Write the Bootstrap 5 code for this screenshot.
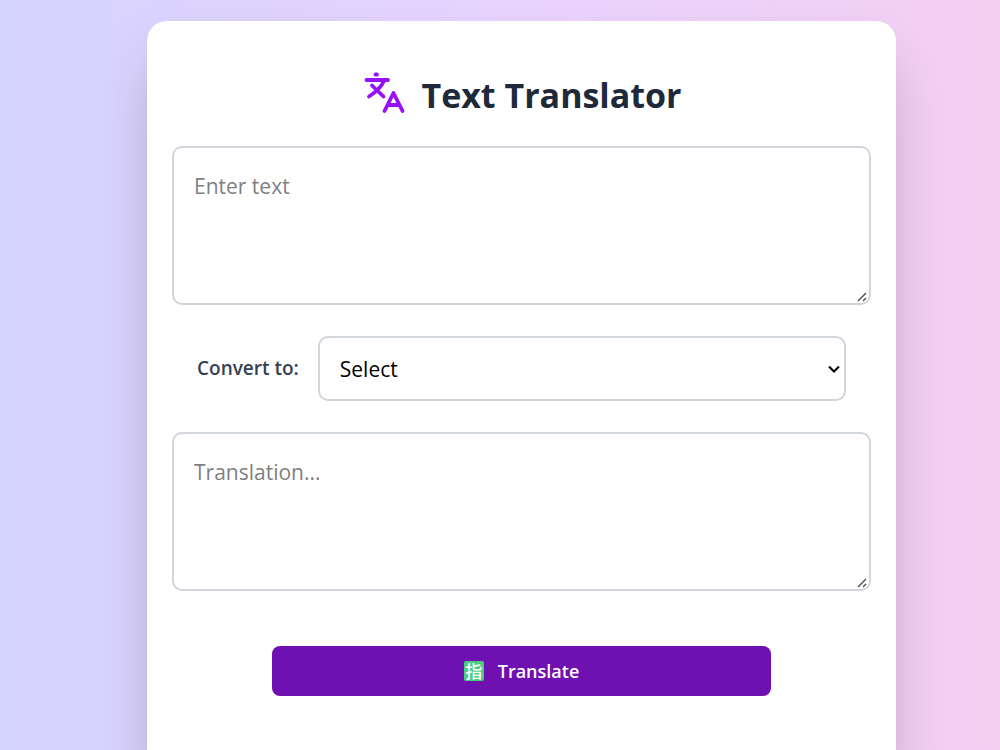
<!DOCTYPE html>
<html lang="en">
<head>
<meta charset="utf-8">
<meta name="viewport" content="width=device-width, initial-scale=1">
<title>Text Translator</title>
<link rel="stylesheet" href="https://cdn.jsdelivr.net/npm/bootstrap@5.3.0/dist/css/bootstrap.min.css">
<style>
  body {
    font-family: "Open Sans", "Noto Sans", sans-serif;
    background: linear-gradient(90deg, #d5d3ff 0%, #e9d4ff 52%, #f5cff2 100%);
    min-height: 100vh;
  }
  .page { padding: 21px 10.4% 0 14.7%; }
  .translator {
    border: 0;
    border-radius: 20px;
    padding: 44px 25px 96px;
    box-shadow: 0 31px 62px -12px rgba(0, 0, 0, .25);
  }
  .title { font-size: 34px; line-height: 48px; color: #1e2939; gap: 12px; margin-bottom: 27px; }
  .title span { padding-top: 6px; }
  .field { border: 2px solid #d1d5dc; border-radius: 10px; font-size: 21px; line-height: 32px; color: #000; }
  .field::placeholder { color: #808080; }
  textarea.field { height: 159px; min-height: 159px; padding: 22px 20px 16px; resize: vertical; }
  textarea.field::-webkit-resizer {
    background: url("data:image/svg+xml,%3Csvg xmlns='http://www.w3.org/2000/svg' width='15' height='15' viewBox='0 0 15 15'%3E%3Cpath d='M4 13 12 5M9 13 12 10' fill='none' stroke='%23555' stroke-width='1.500'/%3E%3C/svg%3E") no-repeat right bottom;
  }
  .target { padding: 0 25px; gap: 19px; margin: 31px 0; }
  .target label { font-size: 19px; color: #364153; white-space: nowrap; }
  select.field {
    height: 65px;
    padding: 0 36px 0 20px;
    background-image: url("data:image/svg+xml,%3Csvg xmlns='http://www.w3.org/2000/svg' viewBox='0 0 12 12'%3E%3Cpath d='M1 3.500 6 8.500 11 3.500' fill='none' stroke='%23000' stroke-width='2'/%3E%3C/svg%3E");
    background-size: 12px 12px;
    background-position: right 4px center;
  }
  .go {
    --bs-btn-color: #fff;
    --bs-btn-bg: #6e11b0;
    --bs-btn-hover-color: #fff;
    --bs-btn-hover-bg: #59168b;
    --bs-btn-active-color: #fff;
    --bs-btn-active-bg: #59168b;
    height: 50px;
    border: 0;
    border-radius: 8px;
    font-size: 18px;
    gap: 14px;
  }
  .action { --bs-gutter-x: 50px; margin-top: 55px; }
  .glyph {
    width: 20px;
    height: 20px;
    border-radius: 2px;
    background: #4ccb83;
    font: 500 17px/19px "Noto Sans CJK JP", sans-serif;
  }
</style>
</head>
<body>
<main class="page">
  <form class="card translator">
    <h1 class="title d-flex justify-content-center align-items-center fw-bold">
      <svg width="48" height="48" viewBox="0 0 48 48" fill="none" stroke="#9810fa" stroke-width="3.800" stroke-linecap="round" stroke-linejoin="round" aria-hidden="true">
        <path d="M14.500 6.500h1.500M5.500 12h21.500M23.500 12C20.500 18.500 16 23.500 8 28.500M11 17.500 22.500 28.500M23.500 43 32.500 25 41.500 43M27 37h11.500"/>
      </svg>
      <span>Text Translator</span>
    </h1>
    <textarea class="form-control field" placeholder="Enter text" aria-label="Enter text"></textarea>
    <div class="target d-flex align-items-center">
      <label for="language" class="fw-semibold">Convert to:</label>
      <select id="language" class="form-select field">
        <option>Select</option>
      </select>
    </div>
    <textarea class="form-control field" placeholder="Translation..." aria-label="Translation"></textarea>
    <div class="action row justify-content-center">
      <div class="col-8 px-0">
        <button type="button" class="btn go w-100 d-flex justify-content-center align-items-center fw-semibold">
          <span class="glyph" lang="ja" aria-hidden="true">指</span>
          <span>Translate</span>
        </button>
      </div>
    </div>
  </form>
</main>
<script src="https://cdn.jsdelivr.net/npm/bootstrap@5.3.0/dist/js/bootstrap.bundle.min.js"></script>
</body>
</html>
